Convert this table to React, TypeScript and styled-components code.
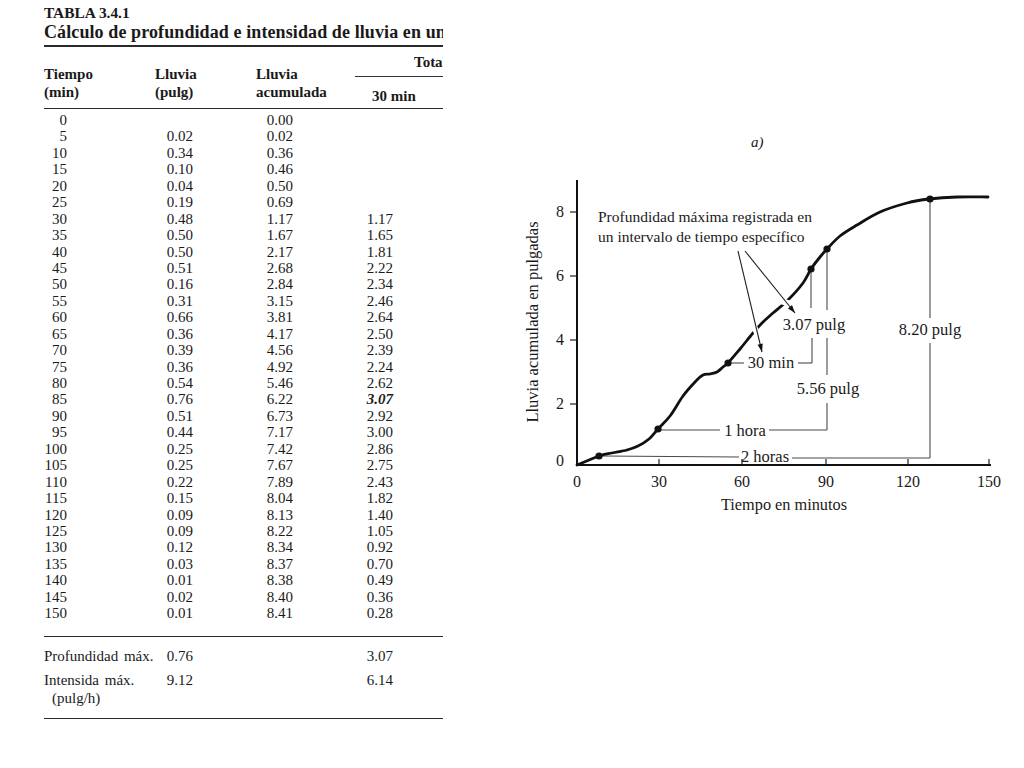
import React from "react";
import styled, { createGlobalStyle } from "styled-components";

const GlobalStyle = createGlobalStyle`
  html, body { margin: 0; padding: 0; background: #fff; }
  body { font-family: "Liberation Serif", "Times New Roman", serif; color: #1a1a1a; }
`;

const Page = styled.div`
  display: flex;
  align-items: flex-start;
  width: 1024px;
  height: 768px;
  overflow: hidden;
  background: #fff;
`;

const TablePanel = styled.section`
  flex: none;
  margin-left: 44px;
  width: 399px;
  padding-top: 4px;
  overflow: hidden;
`;

const Caption = styled.div`
  font-weight: bold;
  font-size: 15.4px;
  line-height: 18px;
  white-space: nowrap;
`;

const Title = styled.div`
  font-weight: bold;
  font-size: 18px;
  line-height: 20px;
  letter-spacing: 0.1px;
  white-space: nowrap;
`;

const Rule = styled.div<{ $w?: number; $mt?: number }>`
  height: 0;
  width: 399px;
  border-top: ${(p) => p.$w ?? 1}px solid #2a2a2a;
  margin-top: ${(p) => p.$mt ?? 0}px;
`;

const HeaderGrid = styled.div`
  display: grid;
  grid-template-columns: 111px 101px 99px 140px;
  height: 61px;
  font-weight: bold;
  font-size: 15px;
  line-height: 18px;
`;

const HeadCell = styled.div`
  align-self: end;
  padding-bottom: 7px;
  white-space: nowrap;
`;

const GroupHead = styled.div`
  display: flex;
  flex-direction: column;
  justify-content: flex-end;
  padding-bottom: 3px;
`;

const GroupTitle = styled.div`
  border-bottom: 1px solid #333;
  padding: 0 0 5px 59px;
  white-space: nowrap;
`;

const SubHead = styled.div`
  margin-top: 10px;
  padding-left: 17px;
  white-space: nowrap;
`;

const DataGrid = styled.div`
  display: grid;
  grid-template-columns: 23px 126px 100px 100px;
  font-size: 15px;
  line-height: 16.44px;
  padding-top: 3px;
  text-align: right;
`;

const Num = styled.div<{ $em?: boolean }>`
  font-weight: ${(p) => (p.$em ? "bold" : "normal")};
  font-style: ${(p) => (p.$em ? "italic" : "normal")};
`;

const Summary = styled.div`
  display: grid;
  grid-template-columns: 122px 27px 200px;
  row-gap: 6px;
  font-size: 15px;
  line-height: 18px;
  padding: 10px 0 11px;
`;

const SumLabel = styled.div`
  white-space: nowrap;
  word-spacing: 2px;
`;

const SumUnit = styled.div`
  padding-left: 8px;
`;

const SumValue = styled.div`
  text-align: right;
  align-self: start;
`;

const Figure = styled.svg`
  flex: none;
  margin-left: 57px;
  display: block;
`;

type Row = [string, string, string, string];

const rows: Row[] = [
  ["0", "", "0.00", ""],
  ["5", "0.02", "0.02", ""],
  ["10", "0.34", "0.36", ""],
  ["15", "0.10", "0.46", ""],
  ["20", "0.04", "0.50", ""],
  ["25", "0.19", "0.69", ""],
  ["30", "0.48", "1.17", "1.17"],
  ["35", "0.50", "1.67", "1.65"],
  ["40", "0.50", "2.17", "1.81"],
  ["45", "0.51", "2.68", "2.22"],
  ["50", "0.16", "2.84", "2.34"],
  ["55", "0.31", "3.15", "2.46"],
  ["60", "0.66", "3.81", "2.64"],
  ["65", "0.36", "4.17", "2.50"],
  ["70", "0.39", "4.56", "2.39"],
  ["75", "0.36", "4.92", "2.24"],
  ["80", "0.54", "5.46", "2.62"],
  ["85", "0.76", "6.22", "3.07"],
  ["90", "0.51", "6.73", "2.92"],
  ["95", "0.44", "7.17", "3.00"],
  ["100", "0.25", "7.42", "2.86"],
  ["105", "0.25", "7.67", "2.75"],
  ["110", "0.22", "7.89", "2.43"],
  ["115", "0.15", "8.04", "1.82"],
  ["120", "0.09", "8.13", "1.40"],
  ["125", "0.09", "8.22", "1.05"],
  ["130", "0.12", "8.34", "0.92"],
  ["135", "0.03", "8.37", "0.70"],
  ["140", "0.01", "8.38", "0.49"],
  ["145", "0.02", "8.40", "0.36"],
  ["150", "0.01", "8.41", "0.28"],
];

type P = [number, number];

const curvePts: P[] = [
  [577, 465], [599, 456], [612, 453], [627, 450], [638, 446], [649, 439],
  [658, 429], [670, 416], [683, 396], [695, 382], [703, 375], [710, 374],
  [717, 372], [723, 367], [728, 363], [740, 349], [753, 333], [762, 323],
  [773, 313], [788, 300], [803, 283], [811, 269], [820, 257], [827, 249],
  [840, 236], [857, 225], [880, 212], [907, 203], [929, 199], [957, 197],
  [988, 197],
];

function smoothPath(pts: P[]): string {
  let d = `M${pts[0][0]},${pts[0][1]}`;
  for (let i = 0; i < pts.length - 1; i++) {
    const p0 = pts[i - 1] ?? pts[i];
    const p1 = pts[i];
    const p2 = pts[i + 1];
    const p3 = pts[i + 2] ?? p2;
    const c1x = p1[0] + (p2[0] - p0[0]) / 6;
    const c1y = p1[1] + (p2[1] - p0[1]) / 6;
    const c2x = p2[0] - (p3[0] - p1[0]) / 6;
    const c2y = p2[1] - (p3[1] - p1[1]) / 6;
    d += ` C${c1x.toFixed(1)},${c1y.toFixed(1)} ${c2x.toFixed(1)},${c2y.toFixed(1)} ${p2[0]},${p2[1]}`;
  }
  return d;
}

const dots: P[] = [[599, 456], [658, 429], [728, 363], [811, 269], [827, 249], [930, 199]];

function arrowHead(x1: number, y1: number, x2: number, y2: number): string {
  const dx = x2 - x1;
  const dy = y2 - y1;
  const len = Math.hypot(dx, dy);
  const ux = dx / len;
  const uy = dy / len;
  const bx = x2 - ux * 8;
  const by = y2 - uy * 8;
  const px = -uy * 2.6;
  const py = ux * 2.6;
  return `${x2},${y2} ${(bx + px).toFixed(1)},${(by + py).toFixed(1)} ${(bx - px).toFixed(1)},${(by - py).toFixed(1)}`;
}

const arrows: [number, number, number, number][] = [
  [738, 251, 762, 352],
  [745, 251, 795, 313],
];

const leaders: [number, number, number, number][] = [
  [602, 456, 739, 457],
  [792, 458, 930, 458],
  [930, 202, 930, 318],
  [930, 343, 930, 458],
  [661, 430, 720, 430],
  [769, 430, 827, 430],
  [827, 403, 827, 430],
  [827, 252, 827, 310],
  [827, 338, 827, 375],
  [731, 363, 744, 363],
  [798, 363, 812, 363],
  [812, 338, 812, 363],
  [811, 272, 811, 308],
];

const xTicks = [
  { v: "0", x: 577 },
  { v: "30", x: 659 },
  { v: "60", x: 742 },
  { v: "90", x: 826 },
  { v: "120", x: 908 },
  { v: "150", x: 989 },
];

const yTicks = [
  { v: "0", y: 465, ly: 466 },
  { v: "2", y: 404, ly: 409 },
  { v: "4", y: 340, ly: 345 },
  { v: "6", y: 276, ly: 281 },
  { v: "8", y: 212, ly: 217 },
];

const serif = "'Liberation Serif', 'Times New Roman', serif";

function Chart() {
  return (
    <Figure width={524} height={530} viewBox="500 0 524 530" fontFamily={serif} fill="#1a1a1a">
      <text x={751} y={147} fontSize={15} fontStyle="italic">a)</text>

      {/* axes */}
      <line x1={577} y1={180} x2={577} y2={466} stroke="#111" strokeWidth={2} />
      <line x1={576} y1={465} x2={991} y2={465} stroke="#111" strokeWidth={2} />
      {yTicks.map((t) => (
        <g key={t.v}>
          {t.v !== "0" && <line x1={570} y1={t.y} x2={577} y2={t.y} stroke="#222" strokeWidth={1.2} />}
          <text x={564} y={t.ly} fontSize={16} textAnchor="end">{t.v}</text>
        </g>
      ))}
      {xTicks.map((t) => (
        <g key={t.v}>
          {t.v !== "0" && <line x1={t.x} y1={459} x2={t.x} y2={465} stroke="#222" strokeWidth={1.2} />}
          <text x={t.x} y={487} fontSize={16} textAnchor="middle">{t.v}</text>
        </g>
      ))}
      <text x={784} y={510} fontSize={16.3} textAnchor="middle">Tiempo en minutos</text>
      <text x={538} y={322} fontSize={16.5} textAnchor="middle" transform="rotate(-90 538 322)">
        Lluvia acumulada en pulgadas
      </text>

      {/* leaders */}
      {leaders.map(([x1, y1, x2, y2], i) => (
        <line key={i} x1={x1} y1={y1} x2={x2} y2={y2} stroke="#4a4a4a" strokeWidth={1.1} />
      ))}

      {/* curve */}
      <path d={smoothPath(curvePts)} fill="none" stroke="#111" strokeWidth={2.8} strokeLinecap="round" />

      {/* arrows */}
      {arrows.map(([x1, y1, x2, y2], i) => (
        <line key={`h${i}`} x1={x1} y1={y1 + 40} x2={x2} y2={y2 - 8} stroke="#fff" strokeWidth={6} />
      ))}
      {arrows.map(([x1, y1, x2, y2], i) => (
        <g key={`a${i}`}>
          <line x1={x1} y1={y1} x2={x2} y2={y2} stroke="#222" strokeWidth={1.1} />
          <polygon points={arrowHead(x1, y1, x2, y2)} fill="#111" />
        </g>
      ))}

      {dots.map(([x, y], i) => (
        <circle key={i} cx={x} cy={y} r={3.6} fill="#111" />
      ))}

      {/* annotations */}
      <text x={598} y={222} fontSize={15.5}>Profundidad máxima registrada en</text>
      <text x={598} y={242} fontSize={15.5}>un intervalo de tiempo específico</text>
      <text x={814} y={330} fontSize={16.5} textAnchor="middle">3.07 pulg</text>
      <text x={930} y={335} fontSize={16.5} textAnchor="middle">8.20 pulg</text>
      <text x={828} y={394} fontSize={16.5} textAnchor="middle">5.56 pulg</text>
      <text x={771} y={368} fontSize={16.5} textAnchor="middle">30 min</text>
      <text x={745} y={436} fontSize={16.5} textAnchor="middle">1 hora</text>
      <text x={765} y={462} fontSize={16.5} textAnchor="middle">2 horas</text>
    </Figure>
  );
}

export default function App() {
  return (
    <>
      <GlobalStyle />
      <Page>
        <TablePanel>
          <Caption>TABLA 3.4.1</Caption>
          <Title>Cálculo de profundidad e intensidad de lluvia en un punto</Title>
          <Rule $w={2} $mt={3} />
          <HeaderGrid>
            <HeadCell>Tiempo<br />(min)</HeadCell>
            <HeadCell>Lluvia<br />(pulg)</HeadCell>
            <HeadCell>Lluvia<br />acumulada</HeadCell>
            <GroupHead>
              <GroupTitle>Totales móviles</GroupTitle>
              <SubHead>30 min</SubHead>
            </GroupHead>
          </HeaderGrid>
          <Rule />
          <DataGrid>
            {rows.map((r) => (
              <React.Fragment key={r[0]}>
                <Num>{r[0]}</Num>
                <Num>{r[1]}</Num>
                <Num>{r[2]}</Num>
                <Num $em={r[0] === "85"}>{r[3]}</Num>
              </React.Fragment>
            ))}
          </DataGrid>
          <Rule $mt={14} />
          <Summary>
            <SumLabel>Profundidad máx.</SumLabel>
            <SumValue>0.76</SumValue>
            <SumValue>3.07</SumValue>
            <SumLabel>
              Intensida máx.
              <SumUnit>(pulg/h)</SumUnit>
            </SumLabel>
            <SumValue>9.12</SumValue>
            <SumValue>6.14</SumValue>
          </Summary>
          <Rule />
        </TablePanel>
        <Chart />
      </Page>
    </>
  );
}
